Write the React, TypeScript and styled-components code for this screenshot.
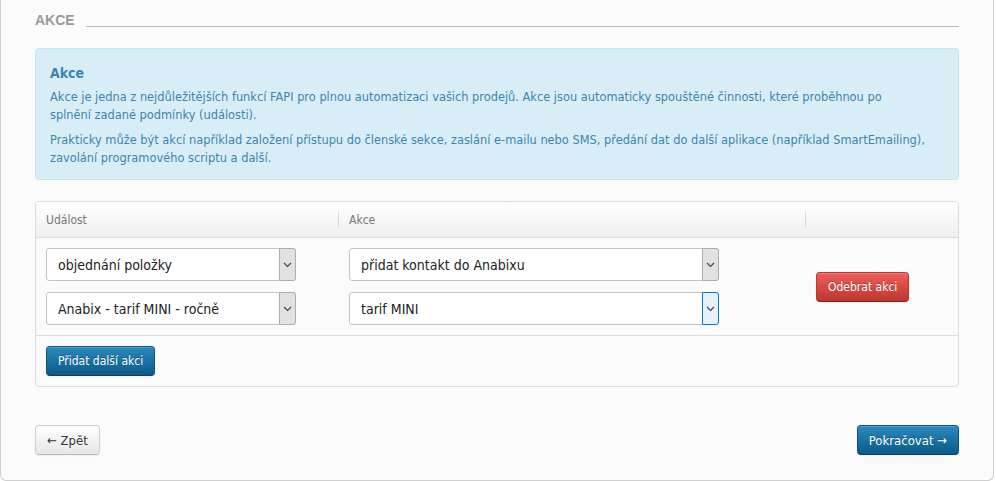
import React from "react";
import styled, { createGlobalStyle, css } from "styled-components";

const GlobalStyle = createGlobalStyle`
  body {
    margin: 0;
    background: #ffffff;
    font-family: "DejaVu Sans Condensed", "DejaVu Sans", sans-serif;
    font-size: 12px;
    color: #333;
  }
`;

const Panel = styled.div`
  box-sizing: border-box;
  width: 994px;
  height: 481px;
  padding: 10px 34px 25px 34px;
  background: #fbfbfb;
  border: 1px solid #cfcfcf;
  border-top: none;
  border-radius: 0 0 6px 6px;
  display: flex;
  flex-direction: column;
`;

const Legend = styled.div`
  display: flex;
  align-items: flex-end;
  height: 20px;
`;

const LegendText = styled.span`
  font-family: "Liberation Sans", Arial, sans-serif;
  font-weight: bold;
  font-size: 14px;
  line-height: 20px;
  color: #9a9a9a;
`;

const LegendLine = styled.span`
  flex: 1;
  margin: 0 0 3px 11px;
  border-bottom: 1px solid #bdbdbd;
`;

const Alert = styled.div`
  margin-top: 18px;
  padding: 14px 20px 5px 14px;
  background: #d9edf7;
  border: 1px solid #bce8f1;
  border-radius: 4px;
  color: #3a87ad;
`;

const AlertTitle = styled.h4`
  margin: 0 0 5px;
  font-size: 14px;
  line-height: 20px;
  font-weight: bold;
`;

const AlertText = styled.p`
  margin: 0 0 7px;
  font-family: "DejaVu Sans", sans-serif;
  font-size: 11.4px;
  line-height: 18px;
`;

const Table = styled.div`
  margin-top: 21px;
  border: 1px solid #dcdcdc;
  border-radius: 4px;
  overflow: hidden;
`;

const Grid = styled.div`
  display: grid;
  grid-template-columns: 302px 467px 1fr;
`;

const HeadRow = styled(Grid)`
  height: 35px;
  background: linear-gradient(#ffffff, #efefef);
  border-bottom: 1px solid #dcdcdc;
`;

const HeadCell = styled.div<{ divider?: boolean }>`
  display: flex;
  align-items: center;
  padding-left: ${(p) => (p.divider ? "11px" : "10px")};
  color: #777;
  position: relative;
  ${(p) =>
    p.divider &&
    css`
      &::before {
        content: "";
        position: absolute;
        left: 0;
        top: 10px;
        bottom: 9px;
        border-left: 1px solid #d8d8d8;
      }
    `}
`;

const BodyRow = styled(Grid)`
  padding: 10px 0;
  border-bottom: 1px solid #dcdcdc;
`;

const Cell = styled.div<{ first?: boolean }>`
  display: flex;
  flex-direction: column;
  gap: 11px;
  padding-left: ${(p) => (p.first ? "10px" : "11px")};
`;

const ActionCell = styled.div`
  display: flex;
  align-items: center;
  padding-left: 11px;
`;

const Select = styled.div<{ width: number }>`
  width: ${(p) => p.width}px;
  height: 33px;
  box-sizing: border-box;
  display: flex;
  background: #fff;
  border: 1px solid #c4c4c4;
  border-radius: 3px;
`;

const SelectValue = styled.span`
  flex: 1;
  display: flex;
  align-items: center;
  padding-left: 11px;
  font-size: 14px;
  color: #222;
`;

const SelectArrow = styled.span<{ focused?: boolean }>`
  width: 17px;
  margin: -1px -1px -1px 0;
  display: flex;
  align-items: center;
  justify-content: center;
  box-sizing: border-box;
  border: 1px solid ${(p) => (p.focused ? "#0a74d1" : "#adadad")};
  border-radius: 0 3px 3px 0;
  background: ${(p) => (p.focused ? "#e5f1fb" : "#e1e1e1")};
`;

const FooterRow = styled.div`
  padding: 10px;
`;

type Variant = "default" | "primary" | "danger";

const variants = {
  default: css`
    color: #333;
    background: linear-gradient(#ffffff, #e6e6e6);
    border-color: #cfcfcf #cfcfcf #b8b8b8;
    text-shadow: 0 1px 1px rgba(255, 255, 255, 0.75);
  `,
  primary: css`
    color: #fff;
    background: linear-gradient(#2a88be, #0c5a88);
    border-color: #0b5583 #0b5583 #083f61;
    text-shadow: 0 -1px 0 rgba(0, 0, 0, 0.25);
  `,
  danger: css`
    color: #fff;
    background: linear-gradient(#ee5f5b, #bd362f);
    border-color: #bd362f #bd362f #802420;
    text-shadow: 0 -1px 0 rgba(0, 0, 0, 0.25);
  `,
};

const Button = styled.button<{ variant: Variant; large?: boolean }>`
  height: 30px;
  padding: 0 11px;
  font-family: inherit;
  font-size: ${(p) => (p.large ? "13px" : "12px")};
  border: 1px solid;
  border-radius: 4px;
  box-shadow: inset 0 1px 0 rgba(255, 255, 255, 0.2), 0 1px 2px rgba(0, 0, 0, 0.05);
  cursor: pointer;
  ${(p) => variants[p.variant]}
`;

const Nav = styled.div`
  margin-top: auto;
  display: flex;
  justify-content: space-between;
`;

const Chevron = () => (
  <svg width="9" height="6" viewBox="0 0 9 6">
    <path d="M1 1l3.5 3.5L8 1" fill="none" stroke="#444" strokeWidth="1.1" />
  </svg>
);

const Dropdown: React.FC<{ value: string; width: number; focused?: boolean }> = ({ value, width, focused }) => (
  <Select width={width}>
    <SelectValue>{value}</SelectValue>
    <SelectArrow focused={focused}>
      <Chevron />
    </SelectArrow>
  </Select>
);

export default function App() {
  return (
    <>
      <GlobalStyle />
      <Panel>
        <Legend>
          <LegendText>AKCE</LegendText>
          <LegendLine />
        </Legend>

        <Alert>
          <AlertTitle>Akce</AlertTitle>
          <AlertText>
            Akce je jedna z nejdůležitějších funkcí FAPI pro plnou automatizaci vašich prodejů. Akce jsou automaticky
            spouštěné činnosti, které proběhnou po
            <br />
            splnění zadané podmínky (události).
          </AlertText>
          <AlertText>
            Prakticky může být akcí například založení přístupu do členské sekce, zaslání e-mailu nebo SMS, předání dat
            do další aplikace (například SmartEmailing),
            <br />
            zavolání programového scriptu a další.
          </AlertText>
        </Alert>

        <Table>
          <HeadRow>
            <HeadCell>Událost</HeadCell>
            <HeadCell divider>Akce</HeadCell>
            <HeadCell divider />
          </HeadRow>
          <BodyRow>
            <Cell first>
              <Dropdown value="objednání položky" width={250} />
              <Dropdown value="Anabix - tarif MINI - ročně" width={250} />
            </Cell>
            <Cell>
              <Dropdown value="přidat kontakt do Anabixu" width={370} />
              <Dropdown value="tarif MINI" width={370} focused />
            </Cell>
            <ActionCell>
              <Button variant="danger">Odebrat akci</Button>
            </ActionCell>
          </BodyRow>
          <FooterRow>
            <Button variant="primary">Přidat další akci</Button>
          </FooterRow>
        </Table>

        <Nav>
          <Button variant="default" large>
            ← Zpět
          </Button>
          <Button variant="primary" large>
            Pokračovat →
          </Button>
        </Nav>
      </Panel>
    </>
  );
}
